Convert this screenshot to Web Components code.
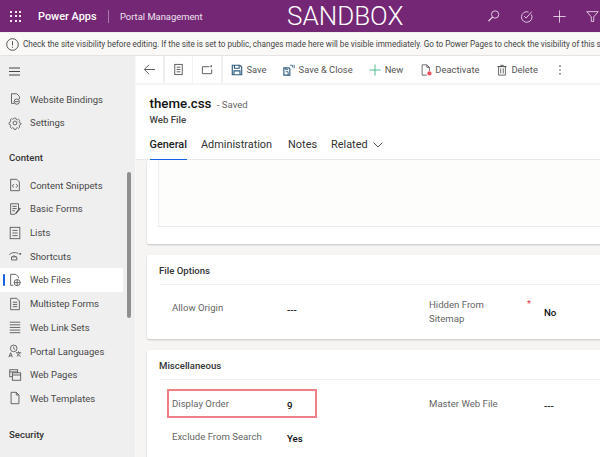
<!DOCTYPE html>
<html>
<head>
<meta charset="utf-8">
<style>
  html, body { margin: 0; height: 100%; overflow: hidden; }
  body {
    width: 600px;
    height: 457px;
    display: flex;
    flex-direction: column;
    font-family: Roboto, "Open Sans", sans-serif;
    background: #f3f2f1;
  }
  .shell { flex: 1; display: flex; min-height: 0; }
</style>
</head>
<body>
<app-topbar></app-topbar>
<app-notice>Check the site visibility before editing. If the site is set to public, changes made here will be visible immediately. Go to Power Pages to check the visibility of this site.</app-notice>
<div class="shell">
  <app-sidenav></app-sidenav>
  <app-main></app-main>
</div>
<script>
const icons = {
  bindings: '<path d="M4 2h6l3 3v3M4 2v11h3"/><circle cx="10" cy="11" r="3"/><path d="M8 11h4"/>',
  settings: '<circle cx="8" cy="8" r="2.2"/><path d="M6.8 1.8h2.4l.4 1.7 1.4.6 1.5-.9 1.6 1.6-.9 1.5.6 1.4 1.7.4v1.8l-1.7.4-.6 1.4.9 1.5-1.6 1.6-1.5-.9-1.4.6-.4 1.7H6.8l-.4-1.7-1.4-.6-1.5.9-1.6-1.6.9-1.5-.6-1.4-1.7-.4V7.3l1.7-.4.6-1.4-.9-1.5 1.6-1.6 1.5.9 1.4-.6z" transform="translate(.8 .8) scale(.9)"/>',
  snippets: '<path d="M3 1.5h7l3 3v10H3z"/><path d="M6.5 7L5 9l1.5 2M9.5 7L11 9l-1.5 2"/>',
  forms: '<path d="M3 2h9v7l-4 5H3z"/><path d="M5 5h5M5 7.5h5M5 10h3"/><path d="M14 7l-5 6" stroke-width="1.6"/>',
  lists: '<rect x="2.5" y="1.5" width="11" height="13"/><path d="M5 5h6M5 8h6M5 11h6"/>',
  shortcuts: '<path d="M1.5 6.5C4 3.5 10 3.5 12 5.5"/><path d="M4 9h6v3.5H4zM5 9c1-1.5 3-1.5 4 0"/><path d="M13 5.5h2" stroke-width="1.8"/>',
  files: '<path d="M3 14V1.5h6l3 3V6M3 14h3"/><circle cx="10.5" cy="11" r="3.5"/><path d="M7 11h7M10.5 7.5v7"/>',
  multistep: '<path d="M3 1.5h7l3 3v10H3z"/><path d="M5.5 6h5M5.5 8.5h5M5.5 11h5"/>',
  linksets: '<path d="M2 2.5h12M2 5.5h12M2 8.5h12M2 11.5h12M2 14.5h12"/>',
  languages: '<circle cx="6.5" cy="5" r="3.8"/><path d="M6.5 3v2.3l1.5 1M1 15l2-5 2 5M1.8 13.5h2.5M9 10h6M12 8.5V10M10 14c2-1 3-2.5 3.5-4M10.5 11c.8 1.5 2 2.5 4 3"/>',
  pages: '<rect x="2" y="2" width="9" height="8"/><rect x="5" y="5.5" width="9.5" height="8.5" fill="#f0f0f0"/><path d="M2 4.5h9M5 8h9.5"/>',
  templates: '<path d="M3.5 1.5h6l3 3v10h-9z"/><path d="M9.5 1.5v3h3"/>',
};

class AppTopbar extends HTMLElement {
  connectedCallback() {
    this.attachShadow({ mode: "open" }).innerHTML = `
      <style>
        :host { display: flex; align-items: center; height: 32px; flex: none; background: #742774; color: #fff; border-bottom: 1px solid #f2f0ee; overflow: hidden; }
        .waffle { width: 11px; margin-left: 10px; display: grid; grid-template-columns: repeat(3, 2px); gap: 2.5px; }
        .waffle i { height: 2px; background: #f4e9f4; }
        .app { margin-left: 17px; font-size: 10.9px; font-weight: 500; white-space: nowrap; width: 70px; }
        .sep { width: 1px; height: 13px; background: #a97aa9; }
        .site { margin-left: 11px; font-size: 9.4px; white-space: nowrap; color: #f0e4f0; width: 167px; }
        .env { font-weight: 300; font-size: 26px; line-height: 32px; width: 118px; white-space: nowrap; }
        .tools { margin-left: 82px; display: flex; gap: 20px; align-items: center; }
        svg { width: 13px; height: 13px; fill: none; stroke: #f4e9f4; stroke-width: 1; display: block; flex: none; }
      </style>
      <div class="waffle">${"<i></i>".repeat(9)}</div>
      <span class="app">Power Apps</span>
      <span class="sep"></span>
      <span class="site">Portal Management</span>
      <span class="env">SANDBOX</span>
      <div class="tools">
        <svg viewBox="0 0 16 16"><circle cx="10" cy="5.5" r="4.5"/><path d="M6.8 8.7l-5 5" stroke-width="1.4"/></svg>
        <svg viewBox="0 0 16 16"><path d="M14 5.5a6.5 6.5 0 1 1-3.5-3"/><path d="M5 7.5l2.5 2.5 7-8"/></svg>
        <svg viewBox="0 0 16 16"><path d="M8 .5v15M.5 8h15"/></svg>
        <svg viewBox="0 0 16 16"><path d="M1 2h14L9.5 8.5V14h-3V8.5z"/></svg>
      </div>`;
  }
}

class AppNotice extends HTMLElement {
  connectedCallback() {
    this.attachShadow({ mode: "open" }).innerHTML = `
      <style>
        :host { display: flex; align-items: center; height: 22px; flex: none; background: #faf9f8; color: #444; font-size: 8.15px; white-space: nowrap; overflow: hidden; border-bottom: 1px solid #e6e4e2; }
        svg { width: 13px; height: 13px; margin: 0 4px 0 6px; flex: none; fill: none; stroke: #444; stroke-width: .9; }
      </style>
      <svg viewBox="0 0 13 13"><circle cx="6.5" cy="6.5" r="5.8"/><path d="M6.5 3.2v4.2M6.5 8.7v1.1"/></svg>
      <slot></slot>`;
  }
}

class NavItem extends HTMLElement {
  connectedCallback() {
    const active = this.hasAttribute("active");
    this.attachShadow({ mode: "open" }).innerHTML = `
      <style>
        :host { display: flex; align-items: center; height: 23.7px; position: relative; color: #484848; font-size: 9.5px; white-space: nowrap; }
        :host([active]) { background: #fff; margin-right: 12px; }
        svg { width: 14px; height: 14px; margin-left: 8px; margin-right: 8px; flex: none; fill: none; stroke: #555; stroke-width: 1; }
        .mark { position: absolute; left: 3px; top: 6px; width: 2px; height: 12px; background: #1664e0; border-radius: 1px; }
      </style>
      ${active ? '<span class="mark"></span>' : ""}
      <svg viewBox="0 0 16 16">${icons[this.getAttribute("icon")] || ""}</svg>
      <slot></slot>`;
  }
}

class NavGroup extends HTMLElement {
  connectedCallback() {
    this.attachShadow({ mode: "open" }).innerHTML = `
      <style>
        :host { display: block; font-size: 9.6px; font-weight: 500; color: #333; padding: 0 9px; line-height: 14px; }
      </style>
      <slot></slot>`;
  }
}

class AppSidenav extends HTMLElement {
  connectedCallback() {
    this.attachShadow({ mode: "open" }).innerHTML = `
      <style>
        :host { display: block; width: 136px; flex: none; background: #efefef; position: relative; overflow: hidden; border-right: 1px solid #f9f9f9; box-sizing: border-box; }
        .menu { height: 31.3px; display: flex; align-items: center; padding-left: 9px; }
        .menu svg { width: 11px; height: 9px; stroke: #444; stroke-width: 1; }
        .g1 { margin-top: 16.6px; margin-bottom: 8.1px; }
        .g2 { margin-top: 17.7px; }
        .scroll { position: absolute; left: 127px; top: 116px; width: 4px; height: 146px; background: #8f8f8f; border-radius: 2px; }
      </style>
      <div class="menu"><svg viewBox="0 0 11 9"><path d="M0 1h11M0 4.5h11M0 8h11"/></svg></div>
      <div>
        <nav-item icon="bindings">Website Bindings</nav-item>
        <nav-item icon="settings">Settings</nav-item>
        <nav-group class="g1">Content</nav-group>
        <nav-item icon="snippets">Content Snippets</nav-item>
        <nav-item icon="forms">Basic Forms</nav-item>
        <nav-item icon="lists">Lists</nav-item>
        <nav-item icon="shortcuts">Shortcuts</nav-item>
        <nav-item icon="files" active>Web Files</nav-item>
        <nav-item icon="multistep">Multistep Forms</nav-item>
        <nav-item icon="linksets">Web Link Sets</nav-item>
        <nav-item icon="languages">Portal Languages</nav-item>
        <nav-item icon="pages">Web Pages</nav-item>
        <nav-item icon="templates">Web Templates</nav-item>
        <nav-group class="g2">Security</nav-group>
      </div>
      <div class="scroll"></div>`;
  }
}

class CmdButton extends HTMLElement {
  connectedCallback() {
    this.attachShadow({ mode: "open" }).innerHTML = `
      <style>
        :host { display: flex; align-items: center; gap: 3.5px; height: 100%; font-size: 9.4px; color: #555; white-space: nowrap; flex: none; }
        ::slotted(svg) { width: 12px; height: 12px; flex: none; }
      </style>
      <slot name="icon"></slot><slot></slot>`;
  }
}

class CmdBar extends HTMLElement {
  connectedCallback() {
    this.attachShadow({ mode: "open" }).innerHTML = `
      <style>
        :host { display: flex; height: 27px; flex: none; background: #f0f0ee; overflow: hidden; }
        .cell { background: #fff; display: flex; align-items: center; justify-content: center; flex: none; }
        .rest { flex: 1; background: #fff; display: flex; align-items: center; padding-left: 8px; gap: 16.5px; margin-left: 2px; }
        svg { fill: none; stroke: #555; stroke-width: 1; }
      </style>
      <div class="cell" style="width:27px"><svg width="13" height="13" viewBox="0 0 14 14"><path d="M13 7H1.5M6.5 2l-5 5 5 5"/></svg></div>
      <div class="cell" style="width:27px;margin-left:2px"><svg width="13" height="13" viewBox="0 0 14 14"><rect x="3" y="1.5" width="8" height="11"/><path d="M5 4.5h4M5 7h4M5 9.5h4"/></svg></div>
      <div class="cell" style="width:28px;margin-left:1px"><svg width="13" height="13" viewBox="0 0 14 14"><path d="M9 4H1.5v7.5h10V7"/><path d="M11 2.5v2" stroke-width="1.6"/></svg></div>
      <div class="rest">
        <slot></slot>
      </div>`;
  }
}

class RecordHeader extends HTMLElement {
  connectedCallback() {
    this.attachShadow({ mode: "open" }).innerHTML = `
      <style>
        :host { display: block; background: #fff; height: 75px; padding: 8.5px 0 0 13.5px; box-sizing: border-box; flex: none; margin-top: 2px; border-bottom: 1px solid #e8e8e8; }
        .title { font-size: 13.3px; font-weight: 500; color: #111; line-height: 19px; white-space: nowrap; }
        .saved { font-size: 9.6px; font-weight: 400; color: #666; margin-left: 2px; }
        .type { font-size: 9.6px; font-weight: 500; color: #444; line-height: 12px; }
        .tabs { display: flex; margin-top: 9px; font-size: 10.9px; color: #333; gap: 14px; line-height: 19px; }
        .tab { padding-bottom: 5px; white-space: nowrap; }
        .tab.on { font-weight: 500; color: #222; border-bottom: 1.5px solid #1664e0; }
        svg { width: 10px; height: 6px; margin-left: 5px; fill: none; stroke: #555; stroke-width: 1; }
      </style>
      <div class="title">theme.css <span class="saved">- Saved</span></div>
      <div class="type">Web File</div>
      <div class="tabs">
        <span class="tab on">General</span>
        <span class="tab">Administration</span>
        <span class="tab" style="margin-left:2px">Notes</span>
        <span class="tab">Related<svg viewBox="0 0 10 6"><path d="M.5.5L5 5 9.5.5"/></svg></span>
      </div>`;
  }
}

class FormCard extends HTMLElement {
  connectedCallback() {
    const title = this.getAttribute("heading");
    this.attachShadow({ mode: "open" }).innerHTML = `
      <style>
        :host { display: block; background: #fff; margin-left: 11px; width: 480px; border-radius: 2px; box-shadow: 0 1px 2px rgba(0,0,0,.2); flex: none; }
        .head { font-size: 9.6px; font-weight: 500; color: #333; margin-left: 12px; height: 29px; line-height: 32.5px; border-bottom: 1px solid #f1f1f1; }
        .grid { display: grid; grid-template-columns: 257px 1fr; padding-left: 25px; }
      </style>
      ${title ? `<div class="head">${title}</div>` : ""}
      <div class="grid"><slot></slot></div>`;
  }
}

class FormField extends HTMLElement {
  connectedCallback() {
    this.attachShadow({ mode: "open" }).innerHTML = `
      <style>
        :host { display: grid; grid-template-columns: 115px 1fr; align-items: start; font-size: 9.6px; color: #666; line-height: 15px; position: relative; }
        .label { line-height: 14px; }
        .value { font-weight: 500; color: #111; font-size: 9.7px; }
        .star { position: absolute; left: 98px; top: 15px; color: #e8303a; font-size: 9px; line-height: 9px; }
        :host([highlight])::after { content: ""; position: absolute; left: -5px; top: 0; width: 146px; height: 25px; border: 2px solid #f08088; }
      </style>
      <span class="label"><slot name="label"></slot>${this.hasAttribute("required") ? '<span class="star">*</span>' : ""}</span>
      <span class="value"><slot></slot></span>`;
  }
}

class AppMain extends HTMLElement {
  connectedCallback() {
    this.attachShadow({ mode: "open" }).innerHTML = `
      <style>
        :host { display: flex; flex-direction: column; flex: 1; min-width: 0; overflow: hidden; background: #f6f5f3; }
        .scroll { flex: 1; display: flex; flex-direction: column; gap: 11px; overflow: hidden; }
        .box { grid-column: 1 / -1; height: 66px; margin-left: -14px; background: #fdfdfc; border-left: 1px solid #ececec; border-bottom: 1px solid #ececec; }
        cmd-button svg { stroke: #555; fill: none; stroke-width: 1; }
        form-field span[slot] { display: block; }
      </style>
      <cmd-bar>
        <cmd-button><svg slot="icon" viewBox="0 0 14 14"><path d="M1.5 1.5h9l2 2v9h-11z" stroke="#2b5a80" stroke-width="1.3"/><path d="M4 1.5V5h5.5V1.5M3.5 12.5V8h7v4.5" stroke="#2b5a80" stroke-width="1.3"/></svg>Save</cmd-button>
        <cmd-button><svg slot="icon" viewBox="0 0 14 14"><path d="M1 4.5h6l1 1V13H1z" stroke="#2b5a80" stroke-width="1.3"/><path d="M3 9h3v4M3 4.5v2h3" stroke="#2b5a80"/><path d="M8 1.5h3V4M13 1v4" stroke="#2b5a80"/></svg>Save &amp; Close</cmd-button>
        <cmd-button><svg slot="icon" viewBox="0 0 14 14"><path d="M7 .5v13M.5 7h13" stroke="#36b37e"/></svg>New</cmd-button>
        <cmd-button><svg slot="icon" viewBox="0 0 14 14"><path d="M2.5 13V1H8l3 3v4M8 1v3h3M2.5 13H8"/><circle cx="11" cy="11" r="2.5" fill="#e8505b" stroke="none"/></svg>Deactivate</cmd-button>
        <cmd-button><svg slot="icon" viewBox="0 0 14 14"><path d="M3 3h8v10H3zM1.5 3h11M5.5 3V1.5h3V3M5.500 5v6M8.500 5v6"/></svg>Delete</cmd-button>
        <cmd-button><svg slot="icon" viewBox="0 0 14 14"><circle cx="7" cy="2.5" r=".9" fill="#444" stroke="none"/><circle cx="7" cy="7" r=".9" fill="#444" stroke="none"/><circle cx="7" cy="11.5" r=".9" fill="#444" stroke="none"/></svg></cmd-button>
      </cmd-bar>
      <record-header></record-header>
      <div class="scroll">
        <form-card style="height:84px"><div class="box"></div></form-card>
        <form-card heading="File Options" style="height:84px">
          <form-field style="padding-top:15.5px"><span slot="label">Allow Origin</span><span style="display:block;margin-top:1px">---</span></form-field>
          <form-field required style="padding-top:12.5px"><span slot="label">Hidden From<br>Sitemap</span><span style="display:block;margin-top:7.5px">No</span></form-field>
        </form-card>
        <form-card heading="Miscellaneous" style="height:120px">
          <form-field highlight style="margin-top:9px;padding-top:7.5px;height:41px;box-sizing:border-box"><span slot="label">Display Order</span><span style="display:block;margin-top:1.5px">9</span></form-field>
          <form-field style="margin-top:9px;padding-top:7.5px;height:41px;box-sizing:border-box"><span slot="label">Master Web File</span><span style="display:block;margin-top:1.5px">---</span></form-field>
          <form-field><span slot="label">Exclude From Search</span><span style="display:block;margin-top:1px">Yes</span></form-field>
        </form-card>
      </div>`;
  }
}

customElements.define("app-topbar", AppTopbar);
customElements.define("app-notice", AppNotice);
customElements.define("nav-item", NavItem);
customElements.define("nav-group", NavGroup);
customElements.define("app-sidenav", AppSidenav);
customElements.define("cmd-button", CmdButton);
customElements.define("cmd-bar", CmdBar);
customElements.define("record-header", RecordHeader);
customElements.define("form-card", FormCard);
customElements.define("form-field", FormField);
customElements.define("app-main", AppMain);
</script>
</body>
</html>
